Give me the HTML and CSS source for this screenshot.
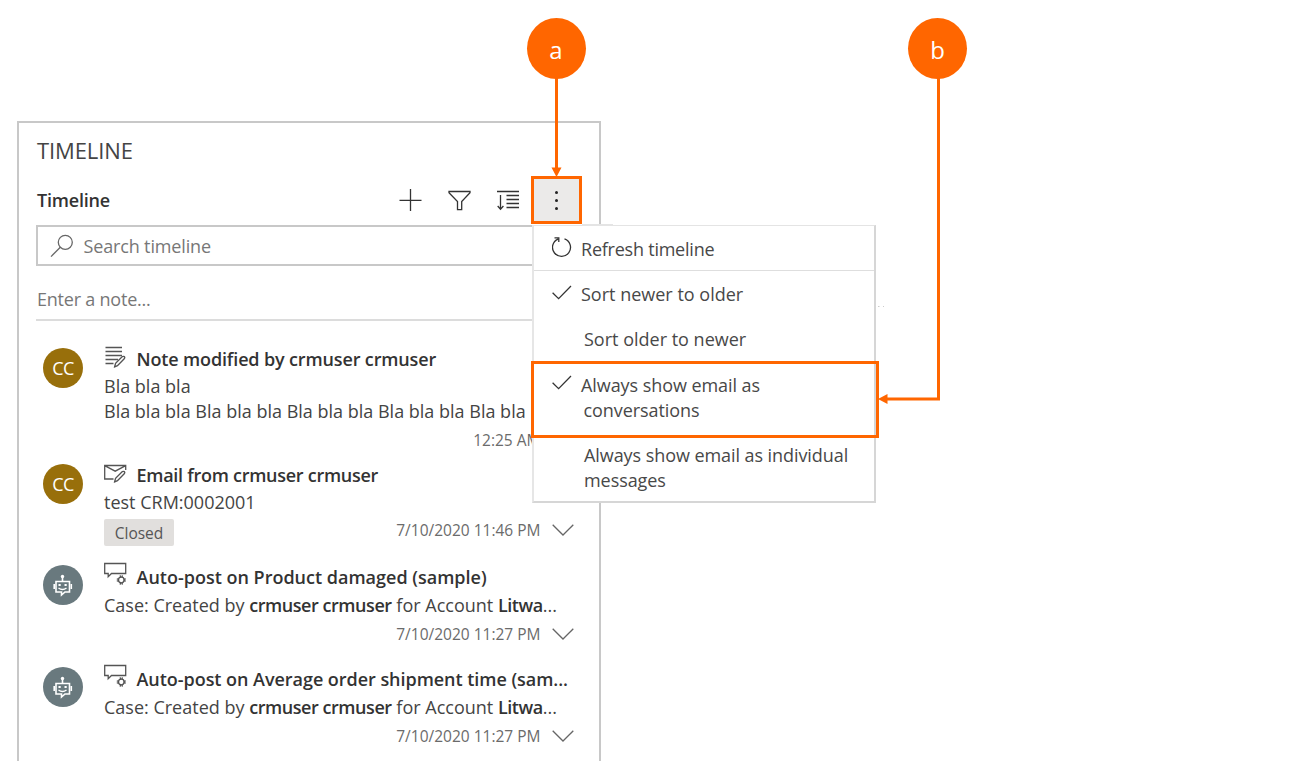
FILE: index.html
```html
<!DOCTYPE html>
<html lang="en">
<head>
<meta charset="utf-8">
<title>Timeline</title>
<link rel="stylesheet" href="styles.css">
</head>
<body>
<svg class="defs" width="0" height="0" aria-hidden="true">
  <symbol id="bot" viewBox="0 0 40 40">
    <circle cx="19.5" cy="11.500" r="1.700" fill="#fff"/>
    <path d="M19.500 12v4M13 16.500h13.500v10.500h-4.500l-3.500 3v-3H13z" fill="none" stroke="#fff" stroke-width="1.600"/>
    <path d="M11.200 19v5M28.300 19v5" stroke="#fff" stroke-width="1.600"/>
    <path d="M15.500 19h2.200v2h-2.200zM21.500 19h2.200v2h-2.200z" fill="#fff"/>
    <path d="M15.500 23q4 3 8 0" fill="none" stroke="#fff" stroke-width="1.400"/>
  </symbol>
  <symbol id="post" viewBox="0 0 24 24">
    <path d="M.7 1.500h21v10H7.500L4.200 14.700v-3.200H.7z"/>
    <circle cx="17.300" cy="18" r="2.800"/>
    <path d="M16.200 13.400l.4 2M18.400 13.400l-.4 2M16.200 22.600l.4-2M18.400 22.600l-.4-2M12.800 16.800l2 .5M12.800 19.200l2-.5M21.800 16.800l-2 .5M21.800 19.200l-2-.5"/>
  </symbol>
  <symbol id="pencil" viewBox="0 0 12 12">
    <path d="M1 11l1-3.500L8.500 1q1.300-.7 2 .2t-.2 2L3.800 9.800z"/>
  </symbol>
  <symbol id="chevron" viewBox="0 0 22 12"><path d="M.7.8L11 11 21.300.8"/></symbol>
  <symbol id="check" viewBox="0 0 20 15"><path d="M.6 7.800l6 5.800L19 1"/></symbol>
</svg>

<section class="panel">
  <h1 class="panel-title">TIMELINE</h1>
  <header class="toolbar">
    <h2 class="toolbar-title">Timeline</h2>
    <svg class="icon tool" width="24" height="24" viewBox="0 0 24 24"><path d="M12.500 1v22M1.500 12.300h22"/></svg>
    <svg class="icon tool" width="24" height="24" viewBox="0 0 24 24"><path d="M2 3.500h21v1.200l-8.300 8.800v8.200h-4.200v-8.200L2 4.700z"/></svg>
    <svg class="icon tool" width="24" height="24" viewBox="0 0 24 24"><path d="M1 3.500h22M4.500 7v14M1.700 18l2.800 3.200L7.400 18M10.500 7.500H23M10.500 11.500H23M10.500 15.500H23M10.500 19.500H23"/></svg>
    <button class="more" aria-label="More"><i></i><i></i><i></i></button>
  </header>
  <div class="search">
    <svg class="icon grey" width="24" height="24" viewBox="0 0 24 24"><circle cx="15.300" cy="8.300" r="7"/><path d="M10.300 13.300L1 22.600"/></svg>
    <span class="search-text">Search timeline</span>
  </div>
  <div class="note"><span class="note-text">Enter a note...</span></div>

  <article class="entry">
    <div class="avatar initials">CC</div>
    <div class="body">
      <div class="head">
        <svg class="icon kind" width="24" height="24" viewBox="0 0 24 24"><path d="M1.500 1.500H18M1.500 5.500H18M1.500 9.500H18M1.500 13.500H14M1.500 17.500H9.500"/><use href="#pencil" x="9.500" y="9.500" width="12.500" height="12.500"/></svg>
        <b class="title t1">Note modified by crmuser crmuser</b>
      </div>
      <p class="line">Bla bla bla</p>
      <p class="line">Bla bla bla Bla bla bla Bla bla bla Bla bla bla Bla bla</p>
      <div class="foot"><time>12:25 AM</time><svg class="icon grey" width="22" height="12"><use href="#chevron"/></svg></div>
    </div>
  </article>

  <article class="entry">
    <div class="avatar initials">CC</div>
    <div class="body">
      <div class="head">
        <svg class="icon kind" width="24" height="24" viewBox="0 0 24 24"><path d="M9.500 17H.7V3.500h21V8M.7 3.700l10.500 5.500 10.500-5.500"/><use href="#pencil" x="9.500" y="8.500" width="12.500" height="12.500"/></svg>
        <b class="title t2">Email from crmuser crmuser</b>
      </div>
      <p class="line">test CRM:0002001</p>
      <div class="foot tagged"><span class="tag">Closed</span><time>7/10/2020 11:46 PM</time><svg class="icon grey" width="22" height="12"><use href="#chevron"/></svg></div>
    </div>
  </article>

  <article class="entry auto">
    <div class="avatar"><svg width="40" height="40"><use href="#bot"/></svg></div>
    <div class="body">
      <div class="head">
        <svg class="icon kind" width="24" height="24"><use href="#post"/></svg>
        <b class="title">Auto-post on Product damaged (sample)</b>
      </div>
      <p class="line">Case: Created by <b>crmuser crmuser</b> for Account <b>Litwa</b>...</p>
      <div class="foot"><time>7/10/2020 11:27 PM</time><svg class="icon grey" width="22" height="12"><use href="#chevron"/></svg></div>
    </div>
  </article>

  <article class="entry auto">
    <div class="avatar"><svg width="40" height="40"><use href="#bot"/></svg></div>
    <div class="body">
      <div class="head">
        <svg class="icon kind" width="24" height="24"><use href="#post"/></svg>
        <b class="title t4">Auto-post on Average order shipment time (sam...</b>
      </div>
      <p class="line">Case: Created by <b>crmuser crmuser</b> for Account <b>Litwa</b>...</p>
      <div class="foot"><time>7/10/2020 11:27 PM</time><svg class="icon grey" width="22" height="12"><use href="#chevron"/></svg></div>
    </div>
  </article>
</section>

<div class="menu">
  <div class="item refresh">
    <svg class="icon" width="20" height="22" viewBox="0 0 20 22"><path d="M12.500 1.900A9 9 0 1 1 6 2.100M2.500 .9h4.300v4"/></svg>
    <span class="m1">Refresh timeline</span>
  </div>
  <div class="item">
    <svg class="icon check" width="20" height="15"><use href="#check"/></svg>
    <span>Sort newer to older</span>
  </div>
  <div class="item plain"><span>Sort older to newer</span></div>
  <div class="item tall">
    <svg class="icon check" width="20" height="15"><use href="#check"/></svg>
    <span class="m4">Always show email as<br><span class="hang">conversations</span></span>
  </div>
  <div class="item plain last"><span class="m5">Always show email as individual<br>messages</span></div>
</div>

<svg class="callouts" width="1316" height="782" viewBox="0 0 1316 782">
  <path d="M582 224.500h31" stroke="#e4e4e4"/>
  <path d="M878 306.500h1.500M883 306.500h1" stroke="#ccc"/>
  <g fill="none" stroke="#ff6600" stroke-width="3">
    <path d="M556.500 78v90M938.500 78v321H887"/>
    <rect x="532.500" y="177.500" width="48" height="45"/>
    <rect x="532.500" y="362.500" width="345" height="74"/>
  </g>
  <g fill="#ff6600">
    <path d="M551.500 167.500h10l-5 9.500zM887.500 394v10l-9.500-5z"/>
    <ellipse cx="556.500" cy="48.500" rx="29.500" ry="30.500"/>
    <ellipse cx="937.500" cy="48.500" rx="29.500" ry="30.500"/>
  </g>
  <text class="letter" x="556" y="59">a</text>
  <text class="letter" x="937.500" y="59">b</text>
</svg>
</body>
</html>
```
FILE: styles.css
```css
* { box-sizing: border-box; }
body {
  margin: 0;
  padding: 121px 0 0 17px;
  height: 782px;
  overflow: hidden;
  position: relative;
  background: #fff;
  color: #444;
  font: 18px/26px "Open Sans", "Noto Sans", sans-serif;
  white-space: nowrap;
}
h1, h2, p { margin: 0; }
b { font-weight: 600; color: #333; }
.defs { position: absolute; }
.icon { flex: none; fill: none; stroke: #333; stroke-width: 1.3; }
.icon.grey { stroke: #666; }

.panel {
  width: 584px;
  height: 640px;
  border: 2px solid #c8c8c8;
  border-bottom: 0;
  padding: 0 17px;
  overflow: hidden;
}
.panel-title { height: 52px; line-height: 54px; font-size: 22px; font-weight: 400; letter-spacing: -.1px; padding-left: 1px; }
.toolbar { display: flex; align-items: center; height: 50px; gap: 25px; }
.toolbar-title { font-size: 18px; font-weight: 600; flex: 1; letter-spacing: -.2px; color: #333; padding-left: 1px; }
.more {
  display: flex; flex-direction: column; align-items: center; justify-content: center; gap: 5px;
  width: 51px; height: 48px; margin-left: -14px; padding: 0; border: 0; background: #ebeae9;
}
.more i { width: 3px; height: 3px; border-radius: 50%; background: #222; }
.search {
  display: flex; align-items: center; gap: 9.5px; letter-spacing: -.15px;
  height: 41px; padding-left: 12px; border: 2px solid #c8c8c8; color: #777;
}
.note { height: 55px; padding: 20px 0 0 1px; border-bottom: 2px solid #dcdcdc; color: #777; margin-bottom: 24px; letter-spacing: -.22px; }

.entry { display: grid; grid-template-columns: 40px 1fr; gap: 21px; height: 116px; padding-left: 7px; }
.entry + .entry { height: 101px; }
.entry + .auto { height: 102px; }
.avatar { width: 40px; height: 40px; margin-top: 3px; border-radius: 50%; background: #69797e; }
.avatar svg { display: block; }
.initials { background: #986f0b; color: #fff; text-align: center; line-height: 41px; letter-spacing: -.5px; }
.head { display: flex; align-items: center; gap: 8.5px; height: 28px; }
.auto .head { height: 30px; }
.kind { stroke: #555; margin-top: -2px; }
.auto .kind { margin-top: -6px; }
.t1 { letter-spacing: -.14px; }
.t2 { letter-spacing: -.27px; }
.t4 { letter-spacing: -.04px; }
.line { line-height: 26px; }
.line b { letter-spacing: -.44px; }
.line + .line { line-height: 25px; }
.foot { display: flex; align-items: center; justify-content: flex-end; gap: 11px; height: 32px; padding-right: 8.5px; color: #6b6b6b; font-size: 15.500px; }
.tagged { height: 30px; }
.tag { height: 27px; width: 70px; margin: 4px auto 0 0; text-align: center; line-height: 28px; border-radius: 2px; background: #e1dfdd; color: #555; }

.menu {
  position: absolute; left: 532px; top: 225px; width: 344px; height: 278px;
  background: #fff; border: 2px solid #d6d6d6; border-top: 1px solid #e4e4e4; border-left-color: #e6e6e6;
  color: #484848;
}
.item { display: flex; gap: 9px; height: 45px; padding: 11px 0 0 18px; line-height: 25px; }
.refresh { height: 45px; border-bottom: 1px solid #dedede; }
.check { margin-top: 3px; }
.m1 { letter-spacing: -.23px; }
.m4, .m5 { letter-spacing: -.07px; }
.plain { padding-left: 50px; }
.tall { height: 70px; padding-top: 12px; }
.tall .check { margin-top: 2px; }
.last { padding-top: 12px; }
.hang { padding-left: 2.5px; }
.callouts { position: absolute; left: 0; top: 0; }
.letter { fill: #fff; font-size: 24px; text-anchor: middle; }
```
